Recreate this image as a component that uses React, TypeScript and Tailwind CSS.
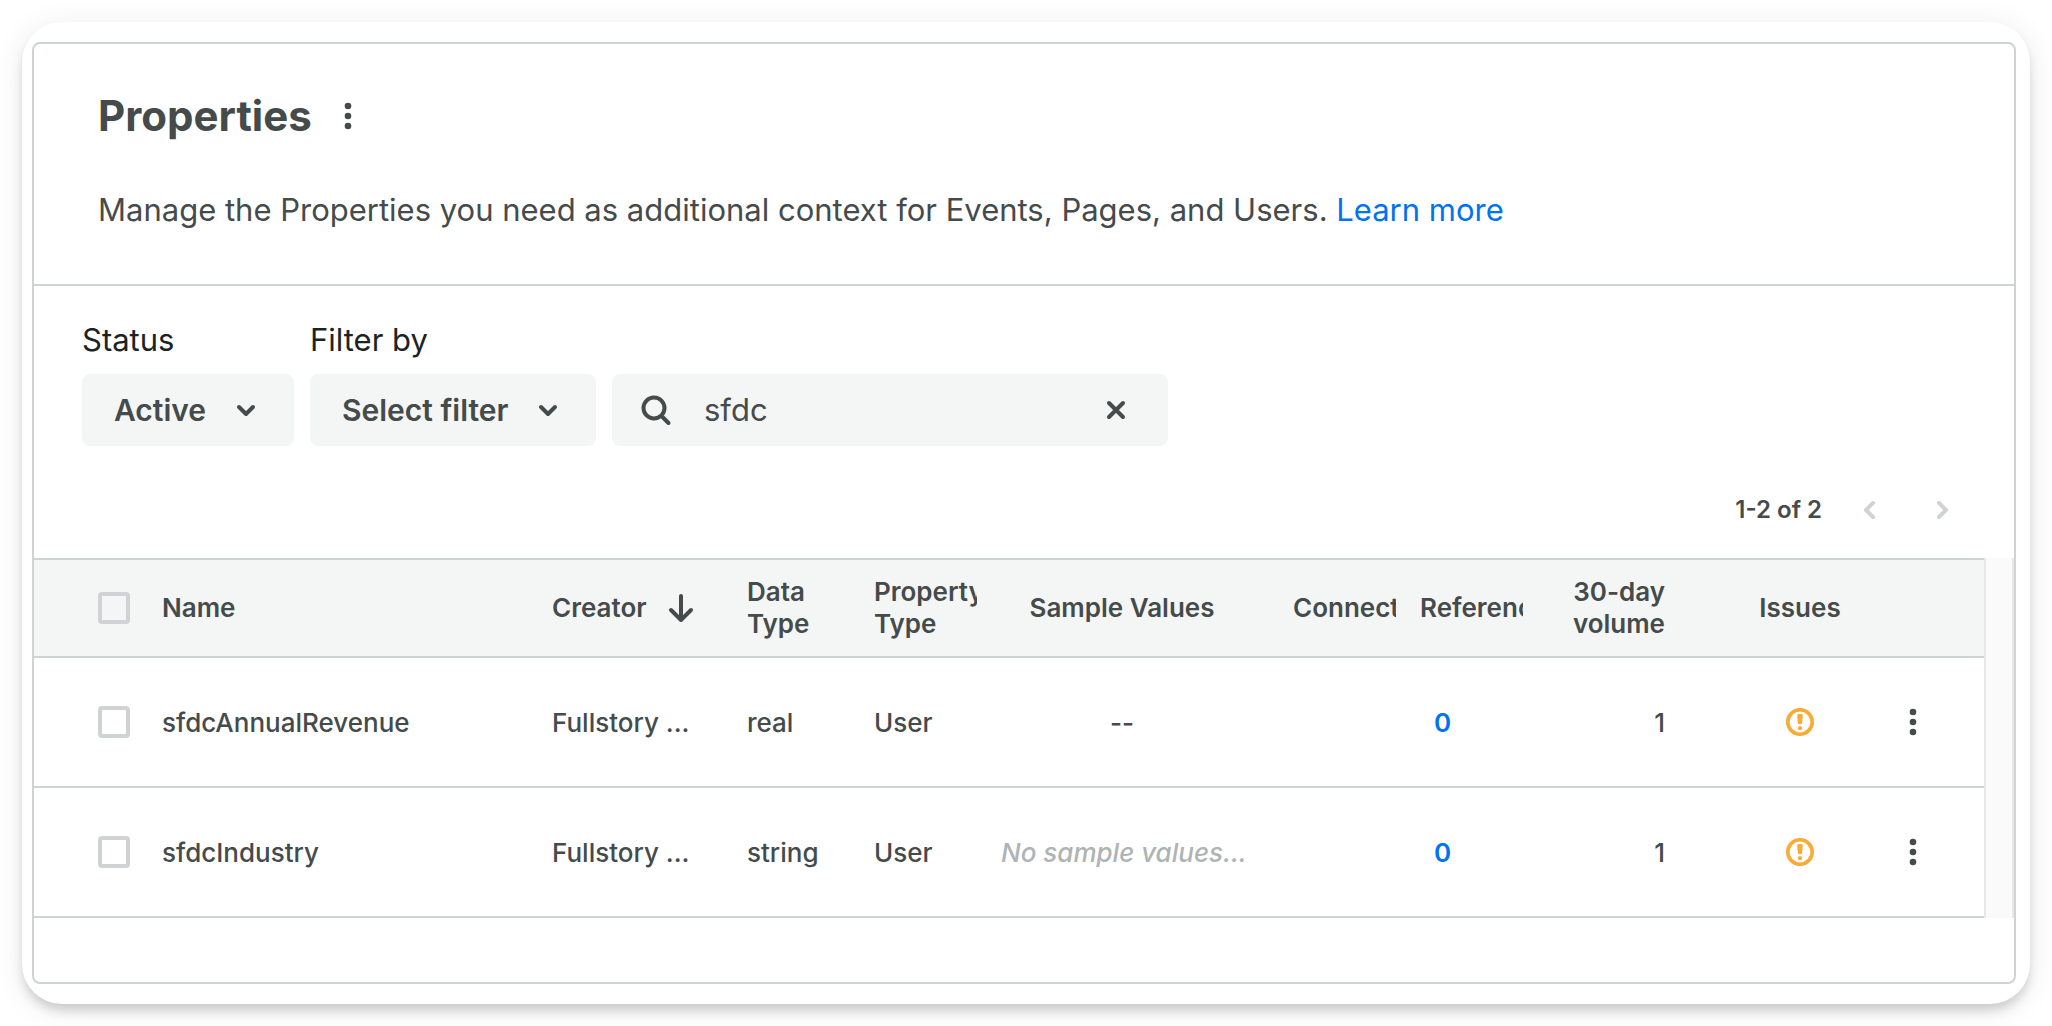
import { useState, type ReactNode } from 'react';

/* ─── Data ──────────────────────────────────────────────────── */
type Property = {
  name: string;
  creator: string;
  dataType: string;
  propertyType: string;
  sample: string | null;
  references: number;
  volume: number;
};

const properties: Property[] = [
  { name: 'sfdcAnnualRevenue', creator: 'Fullstory ...', dataType: 'real', propertyType: 'User', sample: '--', references: 0, volume: 1 },
  { name: 'sfdcIndustry', creator: 'Fullstory ...', dataType: 'string', propertyType: 'User', sample: null, references: 0, volume: 1 },
];

/* ─── Icons ─────────────────────────────────────────────────── */
function DotsIcon() {
  return (
    <svg width="24" height="32" viewBox="0 0 24 32" fill="currentColor" aria-hidden="true">
      <circle cx="12" cy="6" r="3.3" />
      <circle cx="12" cy="16" r="3.3" />
      <circle cx="12" cy="26" r="3.3" />
    </svg>
  );
}

function StrokeIcon({ d, size = 32, className = '' }: { d: string; size?: number; className?: string }) {
  return (
    <svg
      width={size}
      height={size}
      viewBox={`0 0 ${size} ${size}`}
      fill="none"
      stroke="currentColor"
      strokeWidth="4"
      strokeLinecap="round"
      strokeLinejoin="round"
      className={className}
      aria-hidden="true"
    >
      <path d={d} />
    </svg>
  );
}

function WarningIcon() {
  return (
    <svg width="32" height="32" viewBox="0 0 32 32" fill="none" aria-hidden="true" className="text-[#f8ab37]">
      <circle cx="16" cy="16" r="12.2" stroke="currentColor" strokeWidth="3.6" />
      <path d="M13.2 9.6C13.2 8.6 13.9 8 14.8 8h2.4c.9 0 1.6.6 1.6 1.6l-.6 7c-.1 1.2-1 2-2.2 2s-2.1-.8-2.2-2z" fill="currentColor" />
      <circle cx="16" cy="22.2" r="2.1" fill="currentColor" />
    </svg>
  );
}

/* ─── Controls ──────────────────────────────────────────────── */
function Dropdown({ id, width, options }: { id: string; width: string; options: string[] }) {
  return (
    <div className={`relative ${width}`}>
      <select
        id={id}
        className="h-[72px] w-full appearance-none rounded-lg bg-[#f4f6f6] pl-8 pr-14 text-[30px] font-semibold text-[#454b4b]"
      >
        {options.map((o) => (
          <option key={o}>{o}</option>
        ))}
      </select>
      <StrokeIcon d="M9 13l7 7 7-7" className="pointer-events-none absolute right-8 top-5" />
    </div>
  );
}

function Checkbox({ label }: { label: string }) {
  return (
    <input
      type="checkbox"
      aria-label={label}
      className="block size-8 appearance-none rounded-sm border-4 border-[#cfd3d3] bg-transparent checked:bg-[#0073ef]"
    />
  );
}

function Th({ children, className = 'pr-6' }: { children?: ReactNode; className?: string }) {
  return (
    <th scope="col" className={`h-[98px] font-semibold ${className}`}>
      <div className="overflow-hidden">{children}</div>
    </th>
  );
}

export default function App() {
  const [query, setQuery] = useState('sfdc');

  return (
    <div className="flex min-h-screen flex-col bg-white p-[22px] font-['Inter',sans-serif] text-[#454b4b]">
      <div className="flex flex-1 flex-col rounded-[40px] bg-white pb-5 pl-[10px] pr-[14px] pt-5 shadow-[0_8px_12px_-2px_rgba(0,0,0,0.18),0_4px_32px_rgba(0,0,0,0.08)]">
        <main className="flex-1 overflow-hidden rounded-lg border-2 border-[#cfd3d3]">
          {/* Page header */}
          <header className="border-b-2 border-[#cfd3d3] px-16 pb-[54px] pt-11">
            <div className="flex items-center gap-6">
              <h1 className="text-[42px] font-bold leading-[56px]">Properties</h1>
              <button type="button" aria-label="More options">
                <DotsIcon />
              </button>
            </div>
            <p className="mt-[46px] text-[31px] leading-10">
              Manage the Properties you need as additional context for Events, Pages, and Users.{' '}
              <a href="#learn-more" className="text-[#0073ef]">Learn more</a>
            </p>
          </header>

          {/* Filters */}
          <div className="flex items-end gap-4 px-12 pt-[34px]">
            <div>
              <label htmlFor="status" className="mb-[14px] block text-[31px] leading-10 text-[#1b2323]">Status</label>
              <Dropdown id="status" width="w-[212px]" options={['Active', 'Archived']} />
            </div>
            <div>
              <label htmlFor="filter" className="mb-[14px] block text-[31px] leading-10 text-[#1b2323]">Filter by</label>
              <Dropdown id="filter" width="w-[286px]" options={['Select filter', 'Creator', 'Data Type']} />
            </div>
            <div className="flex h-[72px] w-[556px] items-center rounded-lg bg-[#f4f6f6] pl-7 pr-9">
              <StrokeIcon d="M24.5 14a10.5 10.5 0 1 1-21 0a10.5 10.5 0 1 1 21 0M21.5 22l7 7" />
              <input
                type="text"
                aria-label="Search properties"
                value={query}
                onChange={(e) => setQuery(e.target.value)}
                className="ml-8 min-w-0 flex-1 bg-transparent text-[31px] outline-none"
              />
              <button type="button" aria-label="Clear search" onClick={() => setQuery('')}>
                <StrokeIcon d="M9 9l14 14M23 9L9 23" />
              </button>
            </div>
          </div>

          {/* Pagination */}
          <div className="flex items-center justify-end pb-8 pr-14 pt-12 text-2xl font-semibold">
            <span>1-2 of 2</span>
            <button type="button" aria-label="Previous page" disabled className="ml-8 text-[#cfd3d3]">
              <StrokeIcon d="M19 9l-7 7 7 7" />
            </button>
            <button type="button" aria-label="Next page" disabled className="ml-10 text-[#cfd3d3]">
              <StrokeIcon d="M13 9l7 7-7 7" />
            </button>
          </div>

          {/* Table */}
          <div className="flex">
            <div className="min-w-0 flex-1">
              <table className="w-full table-fixed border-collapse text-left text-[26px]">
                <colgroup>
                  <col className="w-[128px]" />
                  <col />
                  <col className="w-[195px]" />
                  <col className="w-[127px]" />
                  <col className="w-[127px]" />
                  <col className="w-[266px]" />
                  <col className="w-[153px]" />
                  <col className="w-[127px]" />
                  <col className="w-[166px]" />
                  <col className="w-[174px]" />
                  <col className="w-[97px]" />
                </colgroup>
                <thead className="border-y-2 border-[#cfd3d3] bg-[#f4f6f6] leading-8">
                  <tr>
                    <Th className="pl-16"><Checkbox label="Select all" /></Th>
                    <Th>Name</Th>
                    <Th className="pr-4">
                      <button type="button" className="flex items-center gap-[18px]">
                        Creator
                        <StrokeIcon d="M16 4v24M6 18l10 10 10-10" className="shrink-0" />
                      </button>
                    </Th>
                    <Th>Data Type</Th>
                    <Th>Property Type</Th>
                    <Th className="pr-6 text-center">Sample Values</Th>
                    <Th className="pl-[26px] pr-6">Connections</Th>
                    <Th>References</Th>
                    <Th className="pr-12 text-right">30-day volume</Th>
                    <Th className="text-center">Issues</Th>
                    <Th />
                  </tr>
                </thead>
                <tbody className="font-medium">
                  {properties.map((p) => (
                    <tr key={p.name} className="h-[130px] border-b-2 border-[#cfd3d3]">
                      <td className="pl-16"><Checkbox label={`Select ${p.name}`} /></td>
                      <td>{p.name}</td>
                      <td className="whitespace-nowrap">{p.creator}</td>
                      <td>{p.dataType}</td>
                      <td>{p.propertyType}</td>
                      <td className="whitespace-nowrap pr-6 text-center">
                        {p.sample ?? <em className="text-[#aeb4b4]">No sample values...</em>}
                      </td>
                      <td />
                      <td className="pl-[14px]">
                        <a href="#references" className="font-semibold text-[#0073ef]">{p.references}</a>
                      </td>
                      <td className="pr-12 text-right">{p.volume}</td>
                      <td>
                        <div className="flex justify-center"><WarningIcon /></div>
                      </td>
                      <td className="pl-[14px]">
                        <button type="button" aria-label={`Actions for ${p.name}`} className="block">
                          <DotsIcon />
                        </button>
                      </td>
                    </tr>
                  ))}
                </tbody>
              </table>
            </div>
            {/* Scrollbar track */}
            <div className="w-[30px] border-x-2 border-[#e8e8e8] bg-[#fafafa]" />
          </div>
        </main>
      </div>
    </div>
  );
}
